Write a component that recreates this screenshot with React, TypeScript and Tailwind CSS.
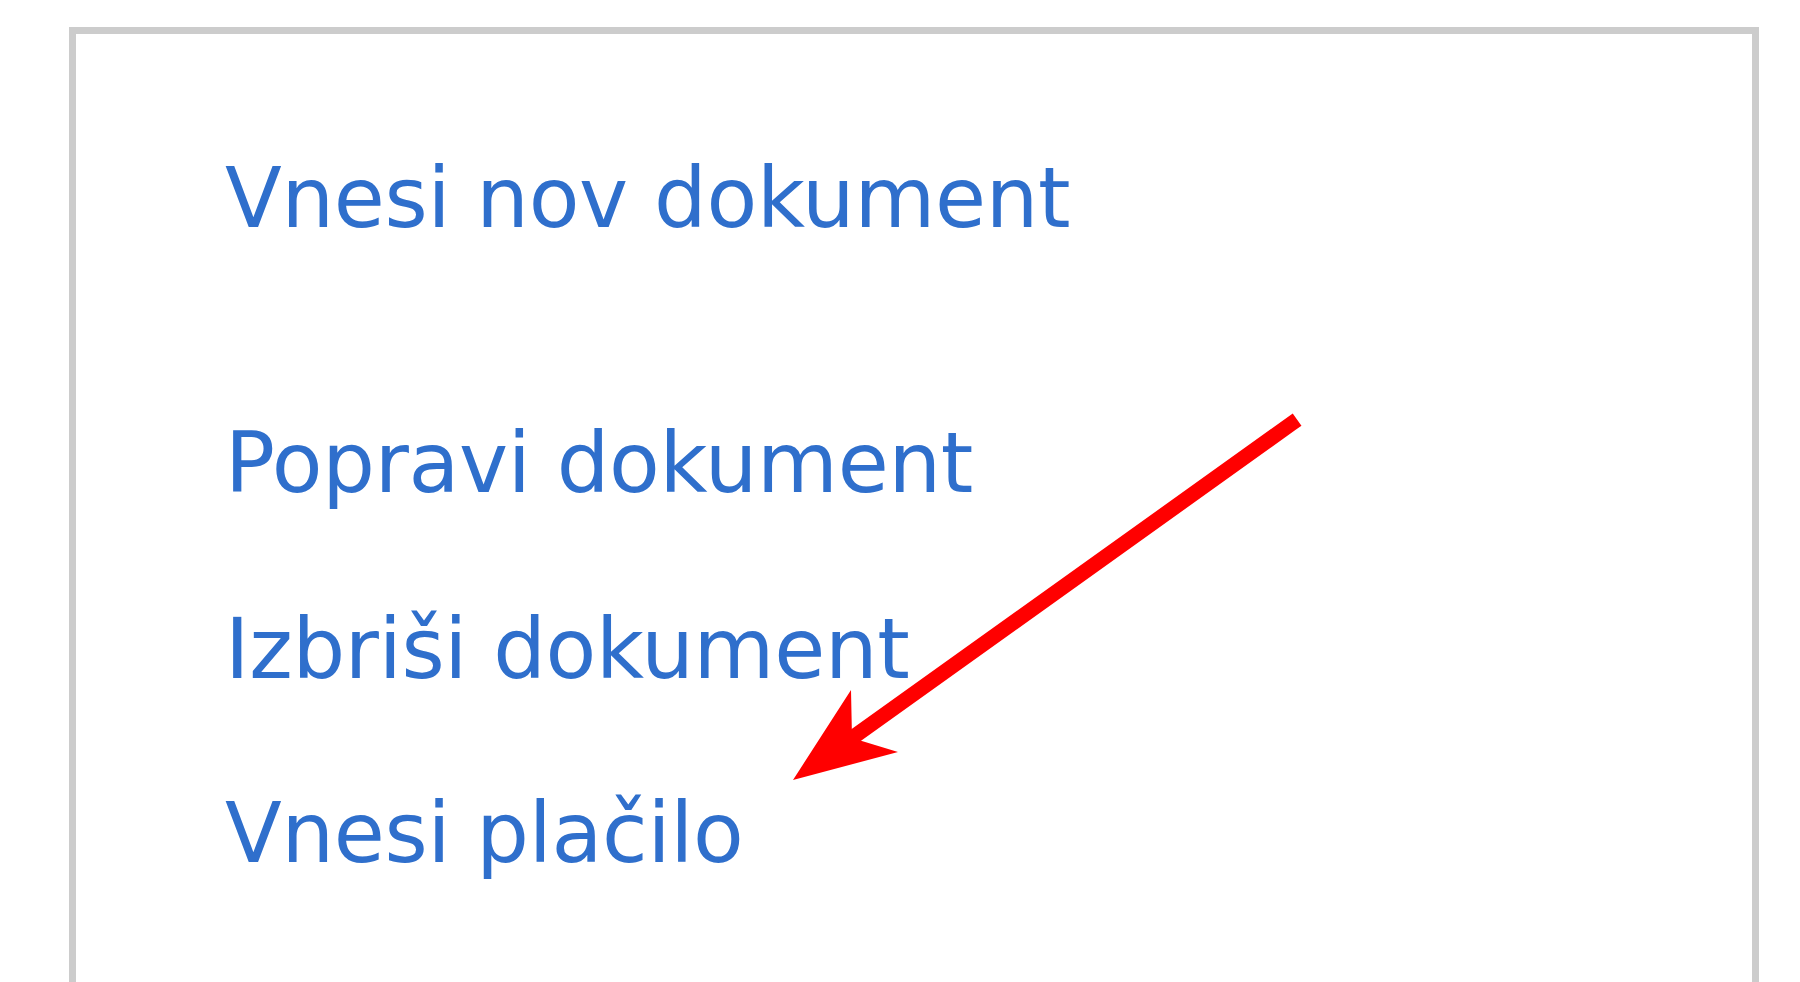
import React from "react";

export default function App() {
  const items = [
    { label: "Vnesi nov dokument", mt: "mt-0" },
    { label: "Popravi dokument", mt: "mt-[165px]" },
    { label: "Izbriši dokument", mt: "mt-[86px]" },
    { label: "Vnesi plačilo", mt: "mt-[84px]" },
  ];
  return (
    <div className="relative w-[1800px] h-[982px] overflow-hidden bg-white">
      <div className="pt-[27px] pl-[69px]">
        <div className="w-[1690px] h-[1100px] border-[7px] border-[#cccccc] bg-white pt-[115px] pl-[149px]">
          <ul className="flex flex-col">
            {items.map((it) => (
              <li
                key={it.label}
                className={`${it.mt} text-[83px] leading-[100px] text-[#2f6fcc] whitespace-nowrap tracking-[-0.3px]`}
                style={{ fontFamily: '"DejaVu Sans", Verdana, sans-serif' }}
              >
                <a className="cursor-pointer">{it.label}</a>
              </li>
            ))}
          </ul>
        </div>
      </div>
      <svg
        className="absolute left-0 top-0 pointer-events-none"
        width="1800"
        height="982"
        viewBox="0 0 1800 982"
      >
        <line
          x1="1291"
          y1="424"
          x2="845"
          y2="743"
          stroke="#ff0000"
          strokeWidth="15"
          strokeLinecap="square"
        />
        <polygon
          points="793,780 851,690 852,738 898,752"
          fill="#ff0000"
        />
      </svg>
    </div>
  );
}
